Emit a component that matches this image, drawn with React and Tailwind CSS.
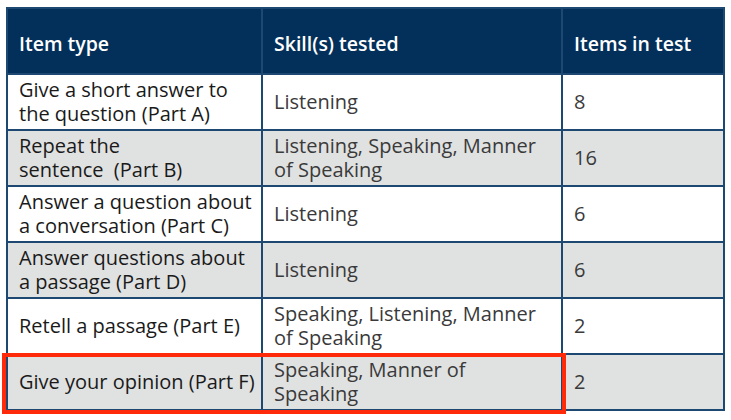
import React from 'react';

// Table rows: item type, skills, count, shaded?
const rows = [
  { item: 'Give a short answer to the question (Part A)', skill: 'Listening', count: '8', shaded: false },
  { item: 'Repeat the\nsentence\u00a0 (Part B)', skill: 'Listening, Speaking, Manner of Speaking', count: '16', shaded: true },
  { item: 'Answer a question about a conversation (Part C)', skill: 'Listening', count: '6', shaded: false },
  { item: 'Answer questions about a passage (Part D)', skill: 'Listening', count: '6', shaded: true },
  { item: 'Retell a passage (Part E)', skill: 'Speaking, Listening, Manner of Speaking', count: '2', shaded: false },
  { item: 'Give your opinion (Part F)', skill: 'Speaking, Manner of\nSpeaking', count: '2', shaded: true },
];

const App = () => {
  return (
    <div className="relative w-[731px] h-[420px] bg-white overflow-hidden" style={{ fontFamily: '"Open Sans", "Noto Sans", sans-serif' }}>
      <div className="pl-[6px] pt-[7px]">
        <table className="w-[717px] border-collapse table-fixed text-[20px] leading-[24px] text-[#3a3a3a]">
          <colgroup>
            <col className="w-[255px]" />
            <col className="w-[300px]" />
            <col className="w-[162px]" />
          </colgroup>
          <thead>
            <tr className="h-[66px] bg-[#03305a] text-white text-[19.5px]">
              <th className="border-2 border-[#1d4872] text-left font-semibold pl-[11px] pr-[2px] pt-[6px]">Item type</th>
              <th className="border-2 border-[#1d4872] text-left font-semibold pl-[11px] pr-[2px] pt-[6px]">Skill(s) tested</th>
              <th className="border-2 border-[#1d4872] text-left font-semibold pl-[11px] pr-[2px] pt-[6px]">Items in test</th>
            </tr>
          </thead>
          <tbody>
            {rows.map((row, i) => (
              <tr key={i} className={`h-[56px] ${row.shaded ? 'bg-[#e0e1e1]' : 'bg-white'}`}>
                <td className="border-2 border-[#1d4872] pl-[11px] pr-[1px] align-middle whitespace-pre-line text-[#1a1a1a]">{row.item}</td>
                <td className="border-2 border-[#1d4872] pl-[11px] pr-[2px] align-middle whitespace-pre-line">{row.skill}</td>
                <td className="border-2 border-[#1d4872] pl-[11px] pr-[2px] align-middle">{row.count}</td>
              </tr>
            ))}
          </tbody>
        </table>
      </div>
      {/* highlight box over the last row */}
      <div className="absolute left-[2px] top-[353px] w-[564px] h-[61px] border-4 border-[#ff2a0a]" />
    </div>
  );
};

export default App;
